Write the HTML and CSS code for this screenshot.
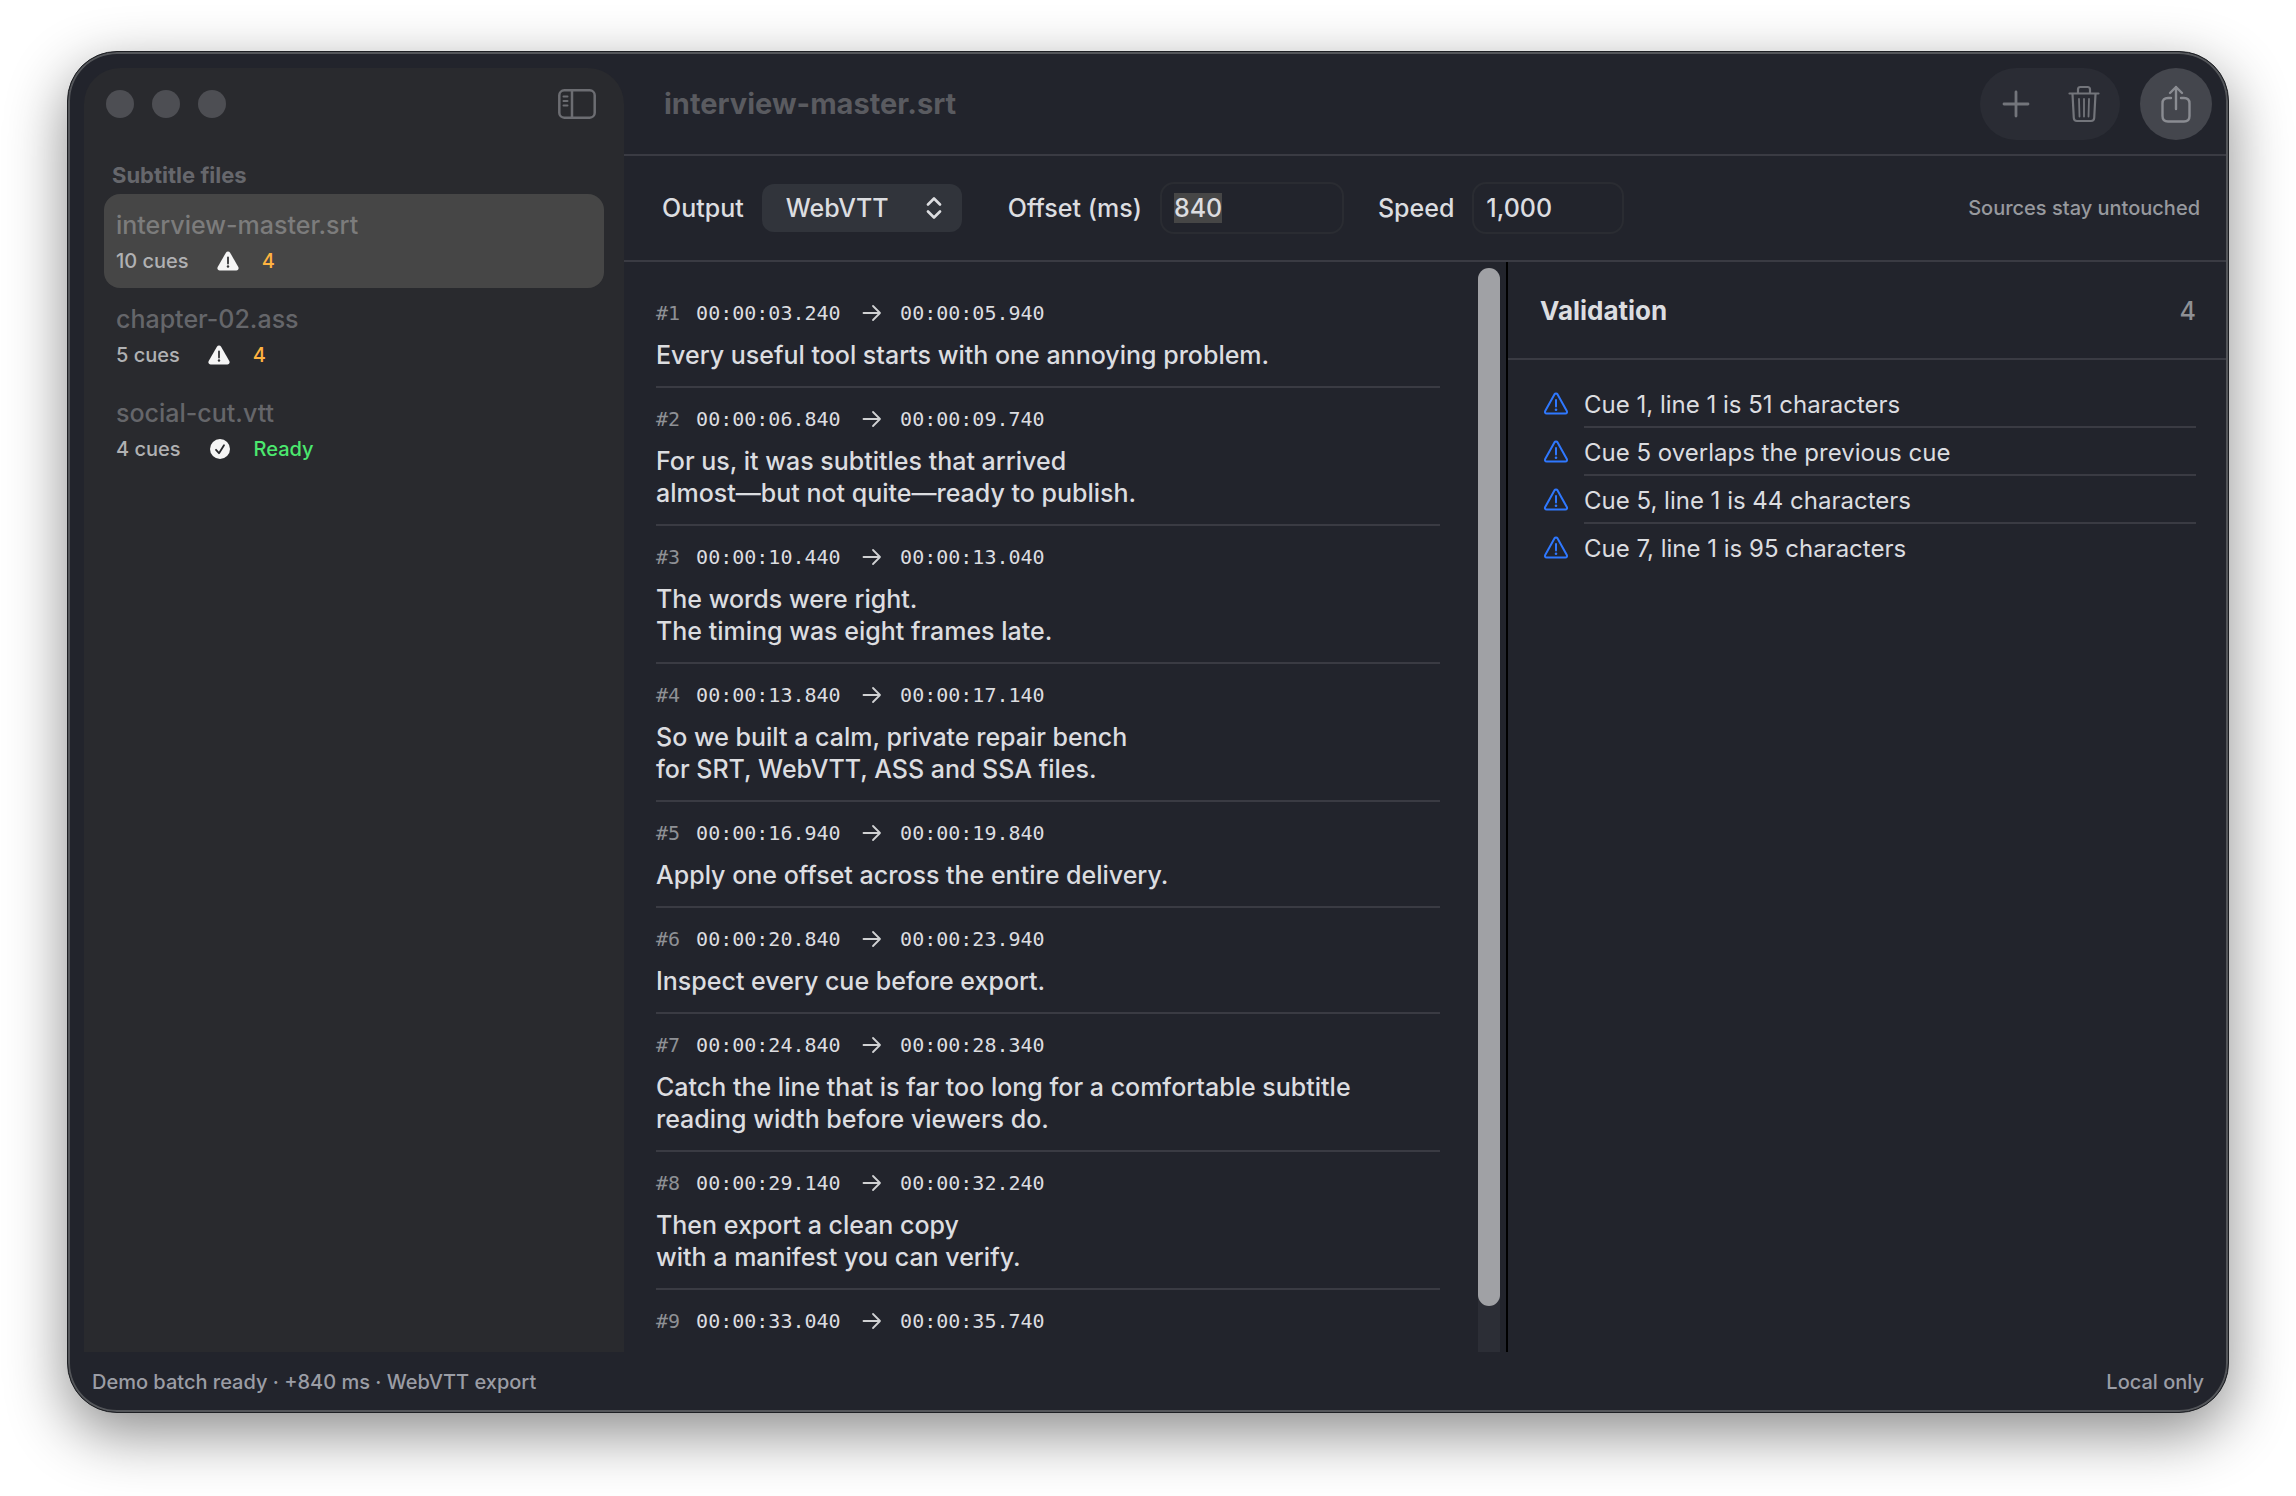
FILE: index.html
```html
<!DOCTYPE html>
<html lang="en">
<head>
  <meta charset="UTF-8" />
  <meta name="viewport" content="width=device-width, initial-scale=1.0"/>
  <title>interview-master.srt</title>
  <link rel="stylesheet" href="styles.css">
</head>
<body>
  <svg class="sprite" aria-hidden="true">
    <symbol id="warn-fill" viewBox="0 0 22 20">
      <path d="M11 .5c.9 0 1.600.4 2.100 1.200l8.200 14.300c.9 1.700-.1 3.500-2 3.500H2.700c-1.900 0-2.900-1.800-2-3.500L8.900 1.700C9.400.9 10.100.5 11 .5z" fill="#f5f5f5"/>
      <path d="M11 6.500v6" stroke="#333436" stroke-width="1.800" stroke-linecap="round"/>
      <circle cx="11" cy="15.500" r="1.200" fill="#333436"/>
    </symbol>
    <symbol id="check-fill" viewBox="0 0 22 20">
      <circle cx="11" cy="10" r="10" fill="#f5f5f5"/>
      <path d="M7 10.800l3 3.400 5-8" fill="none" stroke="#28292d" stroke-width="1.800" stroke-linecap="round" stroke-linejoin="round"/>
    </symbol>
    <symbol id="warn" viewBox="0 0 26 24">
      <path d="M13 1.500c.7 0 1.200.3 1.600.9l9.200 16.600c.7 1.300 0 2.600-1.500 2.600H3.700c-1.500 0-2.200-1.300-1.500-2.600l9.200-16.600c.4-.6.9-.9 1.600-.9z" fill="none" stroke="#2f78ff" stroke-width="2"/>
      <path d="M13 8v6.500" stroke="#2f78ff" stroke-width="2" stroke-linecap="round"/>
      <circle cx="13" cy="17.800" r="1.300" fill="#2f78ff"/>
    </symbol>
    <symbol id="arrow" viewBox="0 0 20 18">
      <path d="M1.500 9h16.500M11 2l7 7-7 7" fill="none" stroke="#d0d1d3" stroke-width="1.800" stroke-linecap="round" stroke-linejoin="round"/>
    </symbol>
  </svg>

  <div class="window">
    <div class="main">
      <aside class="sidebar">
        <div class="sidebar-top">
          <div class="lights"><span></span><span></span><span></span></div>
          <button class="icon-btn" aria-label="Toggle sidebar">
            <svg width="38" height="30" viewBox="0 0 38 30" fill="none" stroke="#6c6d72" stroke-width="2.500" stroke-linecap="round">
              <rect x="1.300" y="1.300" width="35.400" height="27.400" rx="5"/>
              <path d="M14 1.500v27"/>
              <path d="M5.500 7.500h4M5.500 12h4M5.500 16.500h4" stroke-width="2"/>
            </svg>
          </button>
        </div>
        <h3>Subtitle files</h3>
        <div class="file selected">
          <div class="file-name">interview-master.srt</div>
          <div class="file-meta"><span>10 cues</span><svg><use href="#warn-fill"/></svg><b class="warn">4</b></div>
        </div>
        <div class="file">
          <div class="file-name">chapter-02.ass</div>
          <div class="file-meta"><span>5 cues</span><svg><use href="#warn-fill"/></svg><b class="warn">4</b></div>
        </div>
        <div class="file">
          <div class="file-name">social-cut.vtt</div>
          <div class="file-meta"><span>4 cues</span><svg><use href="#check-fill"/></svg><b class="ready">Ready</b></div>
        </div>
      </aside>

      <div class="content">
        <header class="titlebar">
          <h1>interview-master.srt</h1>
          <div class="group">
            <button class="icon-btn" aria-label="Add">
              <svg width="28" height="28" viewBox="0 0 28 28" stroke="#73757b" stroke-width="2.800" stroke-linecap="round">
                <path d="M14 2v24M2 14h24"/>
              </svg>
            </button>
            <button class="icon-btn" aria-label="Delete">
              <svg width="32" height="38" viewBox="0 0 32 38" fill="none" stroke="#73757b" stroke-width="2.200" stroke-linecap="round" stroke-linejoin="round">
                <path d="M1.500 8.500h29M10 8V4.500Q10 2 12.500 2h7Q22 2 22 4.500V8"/>
                <path d="M4.500 9l1.300 24q.2 3 3.200 3h14q3 0 3.200-3L27.500 9"/>
                <path d="M11 14l.5 17.500M16 14v17.500M21 14l-.5 17.500" stroke-width="1.800"/>
              </svg>
            </button>
          </div>
          <button class="icon-btn share" aria-label="Export">
            <svg width="30" height="38" viewBox="0 0 30 38" fill="none" stroke="#8a8c92" stroke-width="2.400" stroke-linecap="round" stroke-linejoin="round">
              <path d="M10 13H7q-5.500 0-5.500 5.500v12.500q0 5.500 5.500 5.500h16q5.500 0 5.500-5.500V18.500Q28.500 13 23 13h-3"/>
              <path d="M15 24V2M9 8l6-6 6 6"/>
            </svg>
          </button>
        </header>

        <div class="toolbar">
          <label for="output">Output</label>
          <div class="select">
            <select id="output"><option>WebVTT</option></select>
            <svg width="16" height="22" viewBox="0 0 16 22" fill="none" stroke="#dcdde0" stroke-width="2.600" stroke-linecap="round" stroke-linejoin="round">
              <path d="M2 7.500l6-6 6 6M2 14.500l6 6 6-6"/>
            </svg>
          </div>
          <label for="offset">Offset (ms)</label>
          <input type="text" id="offset" value="840" />
          <label for="speed">Speed</label>
          <input type="text" id="speed" value="1,000" />
          <small>Sources stay untouched</small>
        </div>

        <div class="panes">
          <div class="cues">
            <div class="cue">
              <div class="cue-head"><i>#1</i><time>00:00:03.240</time><svg><use href="#arrow"/></svg><time>00:00:05.940</time></div>
              <p>Every useful tool starts with one annoying problem.</p>
            </div>
            <div class="cue">
              <div class="cue-head"><i>#2</i><time>00:00:06.840</time><svg><use href="#arrow"/></svg><time>00:00:09.740</time></div>
              <p>For us, it was subtitles that arrived<br>almost—but not quite—ready to publish.</p>
            </div>
            <div class="cue">
              <div class="cue-head"><i>#3</i><time>00:00:10.440</time><svg><use href="#arrow"/></svg><time>00:00:13.040</time></div>
              <p>The words were right.<br>The timing was eight frames late.</p>
            </div>
            <div class="cue">
              <div class="cue-head"><i>#4</i><time>00:00:13.840</time><svg><use href="#arrow"/></svg><time>00:00:17.140</time></div>
              <p>So we built a calm, private repair bench<br>for SRT, WebVTT, ASS and SSA files.</p>
            </div>
            <div class="cue">
              <div class="cue-head"><i>#5</i><time>00:00:16.940</time><svg><use href="#arrow"/></svg><time>00:00:19.840</time></div>
              <p>Apply one offset across the entire delivery.</p>
            </div>
            <div class="cue">
              <div class="cue-head"><i>#6</i><time>00:00:20.840</time><svg><use href="#arrow"/></svg><time>00:00:23.940</time></div>
              <p>Inspect every cue before export.</p>
            </div>
            <div class="cue">
              <div class="cue-head"><i>#7</i><time>00:00:24.840</time><svg><use href="#arrow"/></svg><time>00:00:28.340</time></div>
              <p>Catch the line that is far too long for a comfortable subtitle reading width before viewers do.</p>
            </div>
            <div class="cue">
              <div class="cue-head"><i>#8</i><time>00:00:29.140</time><svg><use href="#arrow"/></svg><time>00:00:32.240</time></div>
              <p>Then export a clean copy<br>with a manifest you can verify.</p>
            </div>
            <div class="cue">
              <div class="cue-head"><i>#9</i><time>00:00:33.040</time><svg><use href="#arrow"/></svg><time>00:00:35.740</time></div>
            </div>
          </div>
          <div class="scrollbar"><div class="thumb"></div></div>
          <section class="validation">
            <div class="validation-head"><h2>Validation</h2><span>4</span></div>
            <ul>
              <li><svg><use href="#warn"/></svg><span>Cue 1, line 1 is 51 characters</span></li>
              <li><svg><use href="#warn"/></svg><span>Cue 5 overlaps the previous cue</span></li>
              <li><svg><use href="#warn"/></svg><span>Cue 5, line 1 is 44 characters</span></li>
              <li><svg><use href="#warn"/></svg><span>Cue 7, line 1 is 95 characters</span></li>
            </ul>
          </section>
        </div>
      </div>
    </div>
    <footer>
      <span>Demo batch ready · +840 ms · WebVTT export</span>
      <span>Local only</span>
    </footer>
  </div>

  <script>
    const offset = document.getElementById('offset');
    offset.focus();
    offset.select();
  </script>
</body>
</html>
```
FILE: styles.css
```css
* {
  box-sizing: border-box;
}
body {
  font-family: Inter, "Liberation Sans", sans-serif;
  font-size: 25px;
  font-weight: 500;
  line-height: 32px;
  background: #fff;
  color: #dcdde0;
  margin: 0;
  padding: 51px 67px 83px;
  height: 100vh;
}
h1, h2, h3, p, ul {
  margin: 0;
  padding: 0;
}
.sprite {
  display: none;
}
.window {
  height: 100%;
  display: flex;
  flex-direction: column;
  overflow: hidden;
  background: #22242c;
  border: 1px solid #1d1f23;
  border-radius: 50px;
  box-shadow: inset 0 0 0 2px #54565a, 0 20px 60px rgba(0, 0, 0, 0.46);
}
.main {
  flex: 1;
  min-height: 0;
  display: flex;
  padding: 0 2px 0 16px;
}

/* sidebar */
.sidebar {
  width: 540px;
  flex: none;
  margin-top: 16px;
  padding: 0 20px;
  background: #292a2e;
  border-radius: 36px 36px 0 0;
}
.sidebar-top {
  height: 72px;
  display: flex;
  align-items: center;
  justify-content: space-between;
  padding: 0 8px 0 2px;
}
.lights {
  display: flex;
  gap: 18px;
}
.lights span {
  width: 28px;
  height: 28px;
  border-radius: 50%;
  background: #4d4e53;
}
.icon-btn {
  display: flex;
  align-items: center;
  justify-content: center;
  background: none;
  border: none;
  padding: 0;
}
.sidebar h3 {
  padding: 19px 8px 3px;
  font-size: 22px;
  font-weight: 700;
  color: #66676c;
}
.file {
  height: 94px;
  padding: 15px 12px;
  border-radius: 16px;
}
.file.selected {
  background: #464646;
}
.file-name {
  color: #65666a;
}
.selected .file-name {
  color: #7c7c7c;
}
.file-meta {
  display: flex;
  align-items: center;
  margin-top: 4px;
  font-size: 20px;
  color: #b0b1b3;
}
.file-meta svg {
  width: 22px;
  height: 20px;
  margin: 0 23px 0 28px;
}
.file-meta b {
  font-weight: 500;
}
.warn {
  color: #ffb340;
}
.ready {
  color: #4be86e;
}

/* title bar */
.content {
  flex: 1;
  min-width: 0;
  display: flex;
  flex-direction: column;
}
.titlebar {
  height: 104px;
  flex: none;
  display: flex;
  align-items: center;
  padding: 2px 14px 0 40px;
  border-bottom: 2px solid #3a3b43;
}
h1 {
  flex: 1;
  font-size: 29px;
  font-weight: 700;
  color: #5a5b60;
}
.group {
  width: 140px;
  height: 72px;
  display: flex;
  align-items: center;
  justify-content: space-between;
  padding: 0 20px 0 22px;
  border-radius: 36px;
  background: #2a2c34;
}
.share {
  width: 72px;
  height: 72px;
  margin-left: 20px;
  border-radius: 50%;
  background: #44464d;
}

/* toolbar */
.toolbar {
  height: 106px;
  flex: none;
  display: flex;
  align-items: center;
  padding: 0 26px 0 38px;
  border-bottom: 2px solid #3a3b43;
}
.select {
  position: relative;
  margin: 0 46px 0 18px;
}
.select svg {
  position: absolute;
  right: 20px;
  top: 13px;
  pointer-events: none;
}
select {
  display: block;
  appearance: none;
  width: 200px;
  height: 48px;
  padding: 0 24px;
  border: none;
  border-radius: 12px;
  background: #31343b;
  color: #dcdde0;
  font: inherit;
}
input {
  width: 184px;
  height: 52px;
  margin: 0 34px 0 18px;
  padding: 0 12px;
  border: 2px solid #2a2c32;
  border-radius: 14px;
  background: none;
  color: #dcdde0;
  font: inherit;
  outline: none;
}
input::selection {
  background: #464646;
  color: #dcdde0;
}
#speed {
  width: 152px;
}
.toolbar small {
  margin-left: auto;
  font-size: 20px;
  color: #97999e;
}

/* cue list */
.panes {
  flex: 1;
  min-height: 0;
  display: flex;
}
.cues {
  flex: 784 1 0;
  min-width: 0;
  overflow: hidden;
  padding: 20px 38px 0 32px;
}
.cue {
  padding: 18px 0 15px;
  border-bottom: 2px solid #3a3b43;
}
.cue:last-child {
  border-bottom: none;
}
.cue-head {
  display: flex;
  align-items: center;
  height: 26px;
  margin-bottom: 13px;
  font-family: "DejaVu Sans Mono", monospace;
  font-size: 20px;
}
.cue-head i {
  font-style: normal;
  color: #8e9095;
  margin-right: 16px;
}
.cue-head time {
  min-width: 148px;
}
.cue-head svg {
  width: 20px;
  height: 18px;
  margin: 0 18px;
}
.scrollbar {
  width: 22px;
  margin: 6px 6px 0 0;
  background: #2c2e36;
  border-radius: 11px 11px 0 0;
}
.thumb {
  height: calc(100% - 46px);
  border-radius: 11px;
  background: #a0a1a5;
}

/* validation */
.validation {
  flex: 718 1 0;
  border-left: 2px solid #000;
}
.validation-head {
  display: flex;
  align-items: center;
  justify-content: space-between;
  height: 98px;
  padding: 2px 30px 0 32px;
  border-bottom: 2px solid #3a3b43;
}
h2 {
  font-size: 26px;
  font-weight: 700;
}
.validation-head span {
  color: #8e9095;
}
ul {
  list-style: none;
  padding: 20px 30px 0 35px;
  font-size: 24px;
  font-weight: 400;
}
li {
  display: flex;
  align-items: center;
}
li svg {
  width: 26px;
  height: 24px;
  margin-right: 15px;
}
li span {
  flex: 1;
  height: 48px;
  line-height: 50px;
  border-bottom: 2px solid #3a3b43;
}
li:last-child span {
  border-bottom: none;
}

footer {
  height: 60px;
  flex: none;
  display: flex;
  justify-content: space-between;
  padding: 14px 24px 0;
  font-size: 20px;
  color: #9b9da5;
}
```
